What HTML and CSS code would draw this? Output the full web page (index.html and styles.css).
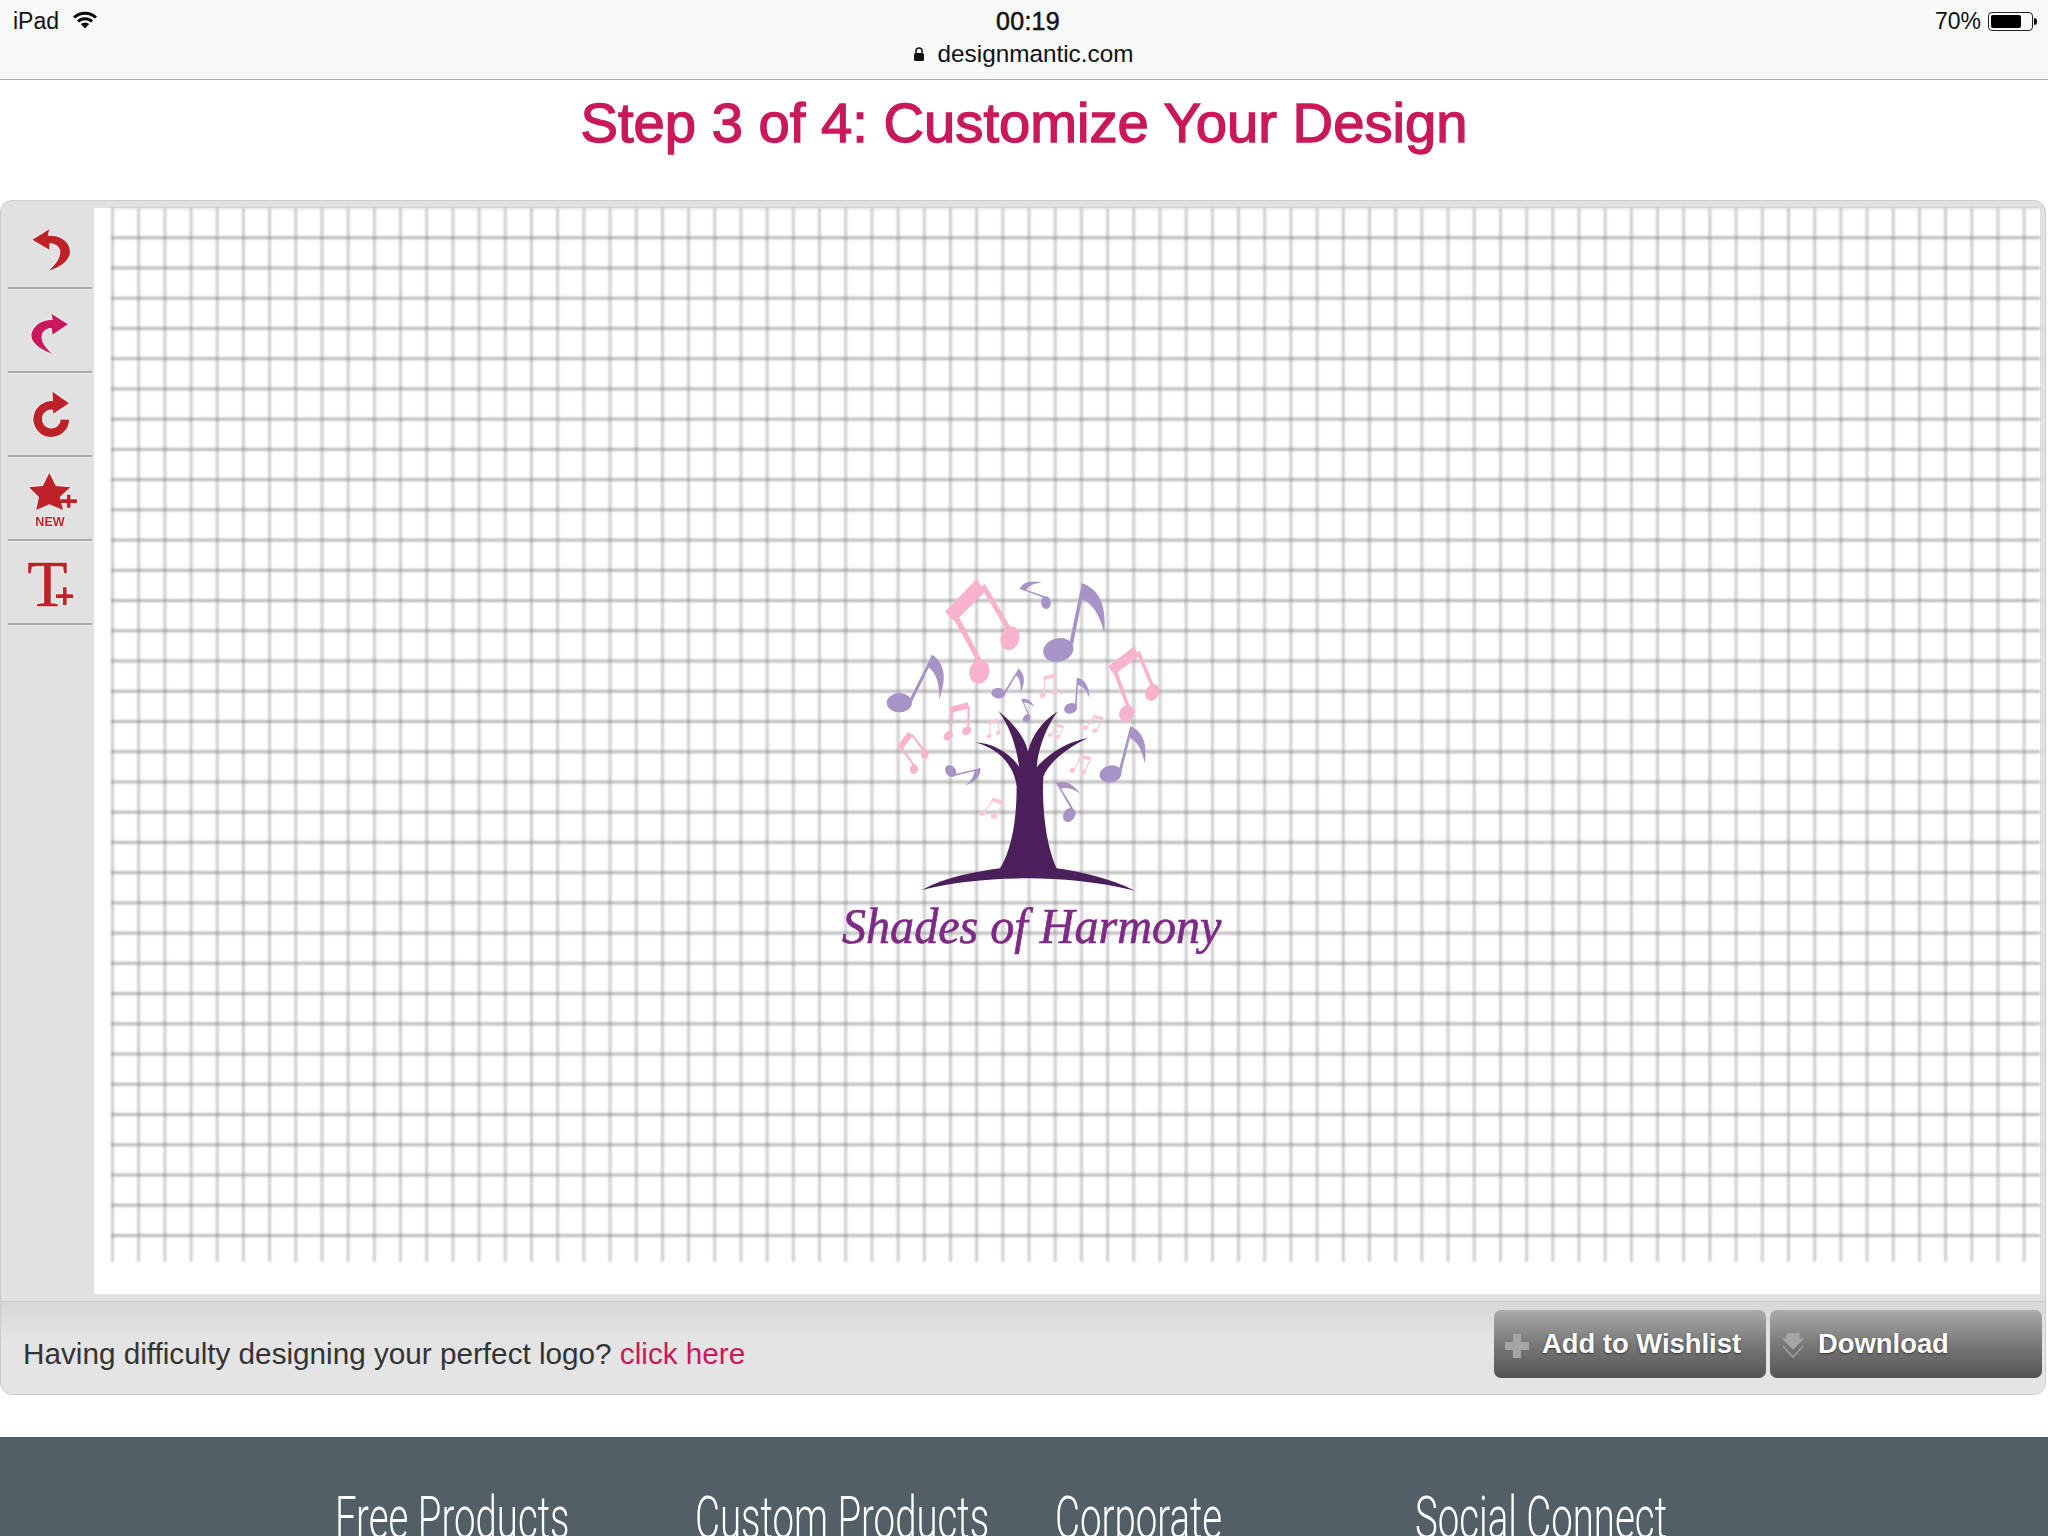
FILE: index.html
```html
<!DOCTYPE html>
<html lang="en">
<head>
    <meta charset="UTF-8">
    <meta name="viewport" content="width=device-width, initial-scale=1.0">
    <title>Customize Your Design</title>
    <link rel="stylesheet" href="styles.css">
</head>
<body>
    <div class="statusbar">
        <div class="status-top">
            <div class="status-left">
                <span>iPad</span>
                <svg class="wifi" viewBox="0 0 24 18"><path d="M1 6.5C7 .7 17 .7 23 6.5" /><path d="M5 10.5c4-3.8 10-3.8 14 0" /><path class="wifi-tip" d="M12 17.5 7.8 13c2.400-1.800 6-1.800 8.400 0z" /></svg>
            </div>
            <span class="clock">00:19</span>
            <div class="status-right">
                <span>70%</span>
                <div class="battery"><div class="battery-fill"></div></div>
                <div class="battery-nub"></div>
            </div>
        </div>
        <div class="address">
            <svg class="lock" viewBox="0 0 12 14"><path d="M3 6V4a3 3 0 0 1 6 0v2" /><rect x="1" y="6" width="10" height="8" rx="1.500" /></svg>
            <span>designmantic.com</span>
        </div>
    </div>

    <h1 class="title">Step 3 of 4: Customize Your Design</h1>

    <div class="panel">
        <div class="workspace">
            <div class="toolbar">
                <div class="tool tool-first">
                    <svg viewBox="24 24 252 238"><path class="red" d="M97 120 148 88 143 108C185 105 212 130 210 158 208 185 175 205 148 212 170 190 185 170 180 150 176 135 160 130 148 130L148 150Z" /></svg>
                </div>
                <div class="tool">
                    <svg viewBox="24 265 252 252"><path class="pink" d="M205 373 155 342 158 360C120 358 92 385 93 410 95 435 130 455 155 463 135 445 120 425 125 405 130 390 145 385 155 385L158 405Z" /></svg>
                </div>
                <div class="tool">
                    <svg viewBox="24 517 252 252"><path class="arc" d="M165 618A42 42 0 1 0 196 660" /><path class="red" d="M158 575 208 610 160 642Z" /></svg>
                </div>
                <div class="tool">
                    <svg viewBox="24 769 252 252">
                        <path class="red" d="M148 818 168 858 212 862 180 892 190 932 148 914 108 932 116 892 86 862 128 858Z" />
                        <path class="red" d="M202 885h11v14h20v11h-20v15h-11v-15h-20v-11h20z" />
                        <text class="new-label" x="150" y="982" textLength="90" lengthAdjust="spacingAndGlyphs">NEW</text>
                    </svg>
                </div>
                <div class="tool">
                    <svg viewBox="24 1021 252 252">
                        <text class="t-label" x="142" y="1222">T</text>
                        <path class="red" d="M190 1163h11v22h20v11h-20v22h-11v-22h-22v-11h22z" />
                    </svg>
                </div>
            </div>

            <div class="canvas">
                <div class="grid"></div>
                <svg class="logo" viewBox="0 0 1260 1260">
                    <defs>
                        <g id="note">
                            <ellipse cx="0" cy="0" rx="46" ry="35" transform="rotate(-15)" />
                            <path d="M33-20 44-15 80-198 70-198Z" />
                            <path d="M70-200C118-185 146-140 138-50 124-105 104-140 66-155Z" />
                        </g>
                        <g id="beamed">
                            <path d="M-95-45 0-143 25-105-65-15Z" />
                            <path d="M-70-25-56-34 20 110 8 118Z" />
                            <path d="M12-120 25-128 112 20 100 28Z" />
                            <ellipse cx="8" cy="135" rx="30" ry="36" transform="rotate(15 8 135)" />
                            <ellipse cx="100" cy="35" rx="28" ry="36" transform="rotate(15 100 35)" />
                        </g>
                    </defs>
                    <g class="lilac">
                        <use href="#note" transform="translate(715 270)" />
                        <use href="#note" transform="translate(238 428) rotate(15) scale(.82)" />
                        <use href="#note" transform="translate(872 642) rotate(3) scale(.73)" />
                        <use href="#note" transform="translate(535 400) rotate(20) scale(.45)" />
                        <use href="#note" transform="translate(752 445) rotate(-8) scale(.44)" />
                        <use href="#note" transform="translate(620 475) rotate(-35) scale(.28)" />
                        <use href="#note" transform="translate(678 128) rotate(-82) scale(.42)" />
                        <use href="#note" transform="translate(392 633) rotate(65) scale(.42)" />
                        <use href="#note" transform="translate(748 765) rotate(-42) scale(.49)" />
                    </g>
                    <g class="rose">
                        <use href="#beamed" transform="translate(470 200)" />
                        <use href="#beamed" transform="translate(928 362) rotate(8) scale(.73)" />
                        <use href="#beamed" transform="translate(412 478) rotate(32) scale(.42)" />
                        <use href="#beamed" transform="translate(272 573) rotate(-7) scale(.41)" />
                    </g>
                    <g class="rose-light">
                        <use href="#beamed" transform="translate(685 373) rotate(31) scale(.27)" />
                        <use href="#beamed" transform="translate(519 502) rotate(27) scale(.21)" />
                        <use href="#beamed" transform="translate(822 488) rotate(64) scale(.23)" />
                        <use href="#beamed" transform="translate(710 511) rotate(58) scale(.18)" />
                        <use href="#beamed" transform="translate(784 610) rotate(56) scale(.25)" />
                        <use href="#beamed" transform="translate(518 741) rotate(63) scale(.27)" />
                    </g>
                    <path class="tree" d="M305 990C380 950 470 935 540 925 575 870 590 780 590 680 585 630 550 570 465 547 520 550 570 580 597 620 590 560 570 500 535 452 580 490 615 530 624 575 635 525 670 480 712 455 680 500 655 560 650 622 690 575 745 545 805 533 750 560 690 600 670 650 665 750 680 860 710 925 790 935 880 960 945 992 830 965 720 955 625 955 510 955 400 965 305 990Z" />
                    <text class="logo-name" x="66" y="1150" textLength="1138" lengthAdjust="spacingAndGlyphs">Shades of Harmony</text>
                </svg>
            </div>
        </div>

        <div class="actions">
            <p class="help">Having difficulty designing your perfect logo? <a href="#">click here</a></p>
            <div class="buttons">
                <a class="btn" href="#">
                    <svg viewBox="0 0 24 30"><path d="M8 3h8v8h8v8h-8v8H8v-8H0v-8h8z" /></svg>
                    Add to Wishlist
                </a>
                <a class="btn" href="#">
                    <svg viewBox="0 0 26 30"><path d="M6 1h14v6h5L13 19 1 7h5z" /><path class="chevron" d="M2 15 13 27 24 15" /></svg>
                    Download
                </a>
            </div>
        </div>
    </div>

    <div class="footer">
        <div class="footer-cols">
            <h3><span>Free Products</span></h3>
            <h3><span>Custom Products</span></h3>
            <h3><span>Corporate</span></h3>
            <h3><span>Social Connect</span></h3>
        </div>
    </div>
</body>
</html>
```

FILE: styles.css
```css
* {
    margin: 0;
    padding: 0;
    box-sizing: border-box;
}

html, body {
    height: 1536px;
    overflow: hidden;
}

body {
    background: #fff;
    font-family: 'Liberation Sans', Arial, sans-serif;
    color: #222;
}

/* ipad status bar + url */
.statusbar {
    height: 80px;
    padding: 7px 11px 0 13px;
    background: #f7f8f8;
    border-bottom: 1px solid #aaa;
    color: #111;
    font-size: 23px;
}

.status-top {
    display: grid;
    grid-template-columns: 1fr auto 1fr;
    align-items: center;
    height: 28px;
}

.status-left {
    display: flex;
    align-items: center;
    gap: 14px;
}

.wifi {
    width: 24px;
    height: 18px;
    margin-top: -4px;
}

.wifi path {
    fill: none;
    stroke: #000;
    stroke-width: 3;
}

.wifi .wifi-tip {
    fill: #000;
    stroke: none;
}

.clock {
    margin-left: 6px;
    font-size: 25px;
    letter-spacing: .3px;
    -webkit-text-stroke: .5px #111;
}

.status-right {
    display: flex;
    align-items: center;
    justify-content: flex-end;
}

.battery {
    width: 45px;
    height: 19px;
    margin-left: 7px;
    padding: 2px;
    border: 1px solid #222;
    border-radius: 4px;
}

.battery-fill {
    width: 30px;
    height: 100%;
    background: #000;
    border-radius: 2px;
}

.battery-nub {
    width: 3px;
    height: 7px;
    margin-left: 1px;
    background: #111;
    border-radius: 0 3px 3px 0;
}

.address {
    display: flex;
    align-items: center;
    justify-content: center;
    gap: 13px;
    margin-top: 5px;
    margin-left: -4px;
    font-size: 24.3px;
}

.lock {
    width: 12px;
    height: 14px;
}

.lock path {
    fill: none;
    stroke: #111;
    stroke-width: 1.500;
}

.lock rect {
    fill: #111;
}

.title {
    height: 120px;
    padding-top: 8px;
    text-align: center;
    font-size: 56.2px;
    line-height: 70px;
    font-weight: normal;
    color: #c8195a;
    -webkit-text-stroke: 1.4px #c8195a;
}

/* main editor panel */
.panel {
    width: 2046px;
    height: 1195px;
    background: #e1e1e1;
    border: 1px solid #ccc;
    border-radius: 12px;
    overflow: hidden;
}

.workspace {
    display: flex;
    height: 1101px;
    padding: 7px 5px 7px 7px;
    border-bottom: 1px solid #ccc;
}

.toolbar {
    width: 86px;
    flex-shrink: 0;
}

.tool {
    width: 84px;
    height: 84px;
    border-bottom: 2px solid #aaa;
    box-shadow: 0 1px 0 #eee;
}

.tool-first {
    height: 81px;
}

.tool svg {
    display: block;
    width: 100%;
    height: 100%;
    filter: drop-shadow(0 0 1px #fff);
}

.tool .red {
    fill: #be2229;
}

.tool .pink {
    fill: #c9185d;
}

.tool .arc {
    fill: none;
    stroke: #be2229;
    stroke-width: 26;
}

.new-label {
    font-size: 40px;
    font-weight: bold;
    text-anchor: middle;
    fill: #be2229;
}

.t-label {
    font-family: 'Liberation Serif', serif;
    font-size: 203px;
    text-anchor: middle;
    fill: #be2229;
    stroke: #be2229;
    stroke-width: 1.5;
}

.canvas {
    position: relative;
    flex: 1;
    background: #fff;
}

/* blurry squared paper behind the logo */
.grid {
    width: 1929px;
    height: 1054px;
    margin-left: 17px;
    filter: blur(.8px);
    background-image:
        linear-gradient(to right, rgba(120, 120, 120, .12) 0, rgba(110, 110, 110, .45) 1px, rgba(110, 110, 110, .45) 2px, rgba(120, 120, 120, .12) 3px, transparent 3px),
        linear-gradient(to bottom, rgba(120, 120, 120, .15) 0, rgba(90, 90, 90, .55) 1px, rgba(90, 90, 90, .55) 2px, rgba(120, 120, 120, .15) 3px, transparent 3px);
    background-size: 26.2px 100%, 100% 30.24px;
    background-repeat: repeat-x, repeat-y;
    background-position: 0 0, 0 -2px;
}

.logo {
    position: absolute;
    left: 726px;
    top: 352px;
    width: 420px;
    height: 420px;
    overflow: visible;
}

.lilac {
    fill: #a793c6;
}

.rose {
    fill: #f7b2cd;
}

.rose-light {
    fill: #f9c6da;
}

.tree {
    fill: #4a1f5a;
}

.logo-name {
    font-family: 'Liberation Serif', serif;
    font-style: italic;
    font-size: 150px;
    fill: #7d2a85;
    stroke: #7d2a85;
    stroke-width: 2;
}

/* bottom bar */
.actions {
    display: flex;
    justify-content: space-between;
    height: 92px;
    padding: 8px 3px 0 22px;
    background: linear-gradient(to bottom, #d8d8d8 0, #e4e4e4 40px);
}

.help {
    padding-top: 26px;
    font-size: 29.7px;
    line-height: 36px;
    color: #333;
}

.help a {
    color: #c8195a;
    text-decoration: none;
}

.buttons {
    display: flex;
    gap: 4px;
}

.btn {
    display: flex;
    align-items: center;
    gap: 13px;
    width: 272px;
    height: 68px;
    padding: 0 0 1px 11px;
    background: linear-gradient(to bottom, #ababab 0, #787878 50%, #555 100%);
    border-radius: 7px;
    color: #fff;
    font-size: 27.4px;
    font-weight: bold;
    text-decoration: none;
    text-shadow: 0 1px 2px #333;
}

.btn svg {
    width: 24px;
    height: 30px;
    margin-top: 4px;
    fill: #a5a5a5;
}

.btn .chevron {
    fill: none;
    stroke: #999;
    stroke-width: 2;
}

.footer {
    height: 99px;
    margin-top: 42px;
    background: #525f67;
    overflow: hidden;
}

.footer-cols {
    display: grid;
    grid-template-columns: repeat(4, 360px);
    padding: 46px 0 0 335px;
}

.footer-cols h3 {
    font-family: Roboto, sans-serif;
    font-size: 60px;
    line-height: 70px;
    font-weight: 300;
    color: #fff;
    white-space: nowrap;
}

.footer-cols span {
    display: inline-block;
    transform: scaleX(.64);
    transform-origin: left top;
}
```
